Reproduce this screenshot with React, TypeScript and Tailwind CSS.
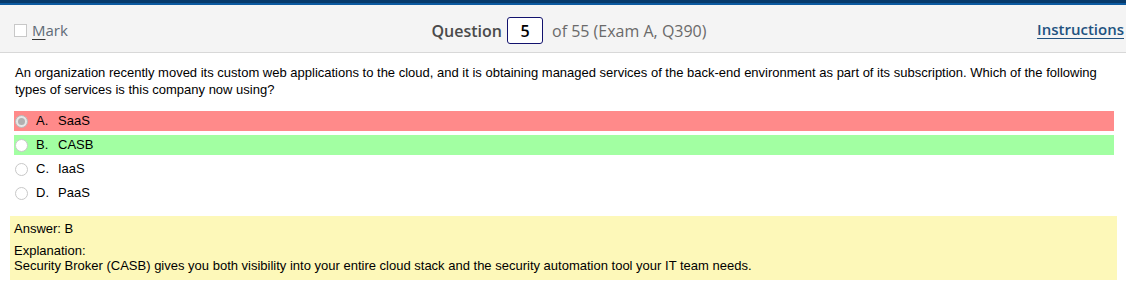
const options = [
  { letter: "A.", text: "SaaS", tone: "bg-[#ff8a8a]", checked: true },
  { letter: "B.", text: "CASB", tone: "bg-[#a2ffa2]", checked: false },
  { letter: "C.", text: "IaaS", tone: "", checked: false },
  { letter: "D.", text: "PaaS", tone: "", checked: false },
];

function Radio({ checked }: { checked: boolean }) {
  return (
    <span
      className={
        "flex h-[13px] w-[13px] items-center justify-center rounded-full border " +
        (checked ? "border-[#b8b8b8] bg-[#e6e6e6]" : "border-[#c8c8c8] bg-white")
      }
    >
      {checked && <span className="h-[7px] w-[7px] rounded-full bg-[#b0b0b0]" />}
    </span>
  );
}

export default function App() {
  return (
    <div className="h-[303px] w-[1126px] bg-white" style={{ fontFamily: "Arial" }}>
      <div className="h-[3px] bg-[#073a6b]" />
      <div className="h-[2px] bg-[#0c5aa0]" />
      <header
        className="grid h-[48px] grid-cols-[1fr_auto_1fr] items-center border-b border-[#d8d8d8] bg-[#f4f4f4] pl-[14px] pr-[2px] text-[15px]"
        style={{ fontFamily: "'Open Sans', sans-serif" }}
      >
        <div className="flex items-center gap-[5px] pt-[4px]">
          <span className="h-[13px] w-[13px] border border-[#c8c8c8] bg-white" />
          <span className="text-[#5f6b77]">
            <span className="underline decoration-[#333] underline-offset-[3px]">M</span>ark
          </span>
        </div>
        <div className="flex items-center pt-[4px] text-[16px]">
          <span className="font-semibold text-[#4a4a4a]">Question</span>
          <span className="ml-[5px] flex h-[27px] w-[36px] items-center justify-center rounded-[3px] border border-[#13136e] bg-white font-semibold text-black">
            5
          </span>
          <span className="ml-[9px] text-[#6a6a6a]">of 55 (Exam A, Q390)</span>
        </div>
        <div className="flex justify-end pt-[2px]">
          <span className="font-semibold text-[#22527f] underline underline-offset-[3px]">Instructions</span>
        </div>
      </header>

      <div className="px-[15px] pt-[11px] text-[13px] leading-[17px] text-black">
        An organization recently moved its custom web applications to the cloud, and it is obtaining managed services of the back-end environment as part of its subscription. Which of the following types of services is this company now using?
      </div>

      <div className="mt-[13px] flex flex-col gap-[4px] pl-[14px] pr-[12px] text-[13px] text-black">
        {options.map((o) => (
          <div key={o.letter} className={"flex h-[20px] items-center " + o.tone}>
            <span className="ml-[1px]">
              <Radio checked={o.checked} />
            </span>
            <span className="ml-[8px] w-[22px]">{o.letter}</span>
            <span>{o.text}</span>
          </div>
        ))}
      </div>

      <div className="mx-[10px] mr-[9px] mt-[13px] h-[64px] bg-[#fdf8b9] px-[4px] pt-[5px] text-[13px] leading-[15px] text-black">
        <div>Answer: B</div>
        <div className="mt-[7px]">Explanation:</div>
        <div>
          Security Broker (CASB) gives you both visibility into your entire cloud stack and the security automation tool your IT team needs.
        </div>
      </div>
    </div>
  );
}
